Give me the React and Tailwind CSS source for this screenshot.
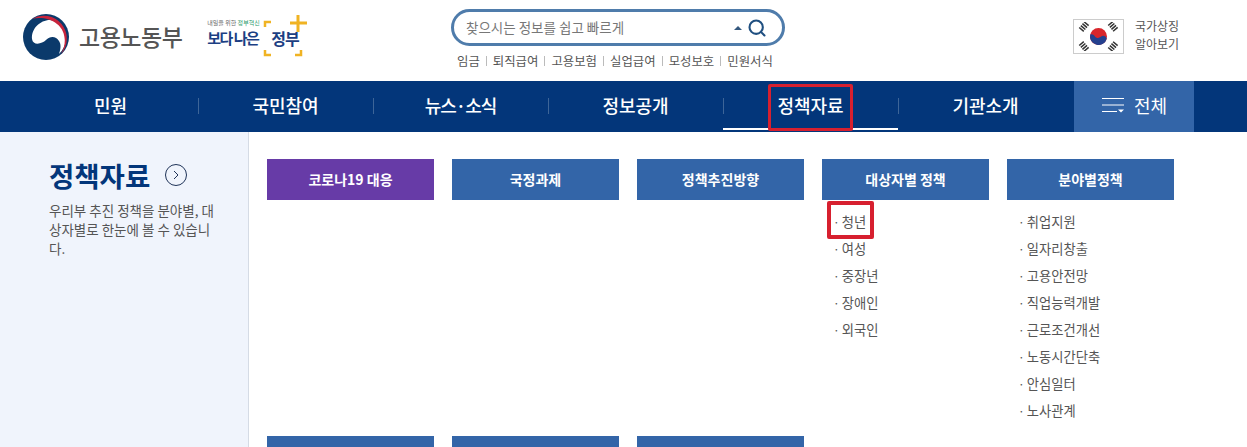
import React from "react";
import { Search } from "lucide-react";

const font = "font-['Noto_Sans_CJK_KR','Noto_Sans',sans-serif]";

const quickLinks = ["임금", "퇴직급여", "고용보험", "실업급여", "모성보호", "민원서식"];
const navItems = ["민원", "국민참여", "뉴스·소식", "정보공개", "정책자료", "기관소개"];
const columns = [
  { title: "코로나19 대응", purple: true, items: [] },
  { title: "국정과제", items: [] },
  { title: "정책추진방향", items: [] },
  { title: "대상자별 정책", items: ["청년", "여성", "중장년", "장애인", "외국인"] },
  {
    title: "분야별정책",
    items: ["취업지원", "일자리창출", "고용안전망", "직업능력개발", "근로조건개선", "노동시간단축", "안심일터", "노사관계"],
  },
];

const Emblem = () => (
  <svg width="46" height="46" viewBox="0 0 46 46">
    <circle cx="23" cy="23" r="23" fill="#0b3a6b" />
    <path d="M9 25C8 15 17 6 27 6c10 1 17 10 16 20-1 6-3 10-7 14 2-6 2-10 0-13-3-5-9-5-13-1-4 4-13 6-14-1z" fill="#fff" />
    <path d="M9 5A23 23 0 0 1 38 40C44 30 43 17 34 10 27 4 16 3 9 5z" fill="#c8243c" />
  </svg>
);

const Flag = () => (
  <div className="w-[51px] h-[35px] border border-[#ccc] flex items-center justify-center">
    <svg width="41" height="29" viewBox="0 0 41 29">
      <circle cx="20.500" cy="14.500" r="8.500" fill="#d8262c" />
      <path d="M12.200 12.600a8.500 8.500 0 0 0 16.600 3.800c-1-2.600-4-3.300-6-1.600-2 1.700-4.500 1.300-5.800-.4-1.300-1.700-3.500-2.800-4.800-1.800z" fill="#24408e" />
      <g stroke="#333" strokeWidth="6" strokeDasharray="1.500 1">
        <path d="M3 8l6-7" />
        <path d="M32 1l6 7" />
        <path d="M3 21l6 7" />
        <path d="M32 28l6-7" />
      </g>
    </svg>
  </div>
);

const LogoGov = () => (
  <div className="relative w-[101px] h-[44px] ml-[25px]">
    <div className="pt-[5px] text-[6px] leading-[8px] text-[#666] whitespace-nowrap">
      내일을 위한 <span className="text-[#2a9a6b]">정부혁신</span>
    </div>
    <div className="flex items-center mt-[-1px] font-bold text-[#1c3f83] whitespace-nowrap text-[16px] leading-[24px] tracking-[-1px]">
      <span className="w-[64px] text-[15px] tracking-[-1.500px]">보다 나은</span>
      <span>정부</span>
    </div>
    <svg className="absolute left-0 top-0" width="101" height="44" viewBox="0 0 101 44" fill="none" stroke="#f0b323" strokeWidth="2.500">
      <path d="M58 13V8h6M58 36v5h6M94 36v5h-6" />
      <path d="M91 1v17M83 9h17" strokeWidth="3" />
    </svg>
  </div>
);

export default function App() {
  return (
    <div className={`${font} h-screen overflow-hidden bg-white`}>
      <header className="h-[81px] flex">
        <div className="w-[451px] pl-[23px] pt-[14px] flex items-start">
          <Emblem />
          <span className="ml-[10px] mt-[4px] text-[23px] leading-[36px] font-medium text-[#555] tracking-[-0.500px] whitespace-nowrap">고용노동부</span>
          <LogoGov />
        </div>
        <div className="w-[334px] pt-[9px]">
          <div className="h-[37px] border-[3px] border-[#4f7cab] rounded-full flex items-center pl-[12px] pr-[15px]">
            <span className="flex-1 text-[13.500px] text-[#777]">찾으시는 정보를 쉽고 빠르게</span>
            <span className="w-0 h-0 border-x-[4px] border-x-transparent border-b-[4px] border-b-[#34587e] mr-[5px]" />
            <Search size={20} strokeWidth={2.500} className="text-[#1f4f80]" />
          </div>
          <div className="flex items-center pl-[6px] mt-[6px] text-[12.400px] leading-[18px] text-[#555] whitespace-nowrap">
            {quickLinks.map((t, i) => (
              <React.Fragment key={t}>
                {i > 0 && <span className="w-px h-[10px] bg-[#bbb] mx-[6px]" />}
                <span>{t}</span>
              </React.Fragment>
            ))}
          </div>
        </div>
        <div className="ml-[288px] pt-[19px] flex">
          <Flag />
          <div className="ml-[11px] mt-[-2px] text-[12px] leading-[18px] text-[#555]">
            <div>국가상징</div>
            <div>알아보기</div>
          </div>
        </div>
      </header>

      <nav className="h-[51px] bg-[#03367a] pl-[23px] flex">
        {navItems.map((t, i) => (
          <div key={t} className={`relative w-[175px] flex items-center justify-center pb-[3px] text-[18px] font-medium text-white ${i === 2 ? "tracking-[-1px]" : ""}`}>
            {i > 0 && <span className="absolute left-0 top-[17px] w-px h-[16px] bg-[#3d6598]" />}
            {t}
            {i === 4 && (
              <>
                <span className="absolute left-0 right-0 bottom-[2px] h-[2px] bg-white" />
                <span className="absolute left-[45px] top-[3px] w-[85px] h-[47px] border-[3px] border-[#d7202f] rounded-[2px]" />
              </>
            )}
          </div>
        ))}
        <div className="ml-[1px] w-[120px] bg-[#3365a8] flex items-center justify-center gap-[9px] pb-[3px] text-white text-[18px]">
          <svg width="24" height="16" viewBox="0 0 24 16" fill="none">
            <path d="M1 1.500h22M1 8h22M1 14.500h15" stroke="#fff" />
            <path d="M17 12.500h6l-3 3z" fill="#fff" />
          </svg>
          전체
        </div>
      </nav>

      <main className="flex h-[315px]">
        <aside className="w-[249px] shrink-0 bg-[#f0f4fc] border-r border-[#d5dbe5] pl-[49px] pr-[29px] pt-[25px]">
          <div className="flex items-center">
            <h2 className="text-[27.500px] leading-[36px] font-bold text-[#03367a] whitespace-nowrap">정책자료</h2>
            <span className="ml-[15px] w-[22px] h-[22px] rounded-full border border-[#1f3358] flex items-center justify-center">
              <svg width="6" height="10" viewBox="0 0 6 10" fill="none"><path d="M1 1l4 4-4 4" stroke="#1f3358" /></svg>
            </span>
          </div>
          <p className="mt-[8px] text-[13.500px] leading-[19px] text-[#555] break-all">우리부 추진 정책을 분야별, 대상자별로 한눈에 볼 수 있습니다.</p>
        </aside>
        <div className="pl-[18px] pt-[27px]">
          <div className="flex gap-[18px] h-[277px]">
            {columns.map((c) => (
              <div key={c.title} className="w-[167px]">
                <div className={`h-[41px] flex items-center justify-center text-[14px] font-bold text-white ${c.purple ? "bg-[#673ba7]" : "bg-[#3365a8]"}`}>
                  {c.title}
                </div>
                <ul className="mt-[8px] pl-[11px]">
                  {c.items.map((t) => (
                    <li key={t} className="relative h-[27px] flex items-center text-[13.300px] text-[#555]">
                      <span className="mr-[2px] text-[12px]">·</span>{t}
                      {t === "청년" && <span className="absolute left-[-6px] top-[-7px] w-[47px] h-[38px] border-[4px] border-[#d7202f] rounded-[2px]" />}
                    </li>
                  ))}
                </ul>
              </div>
            ))}
          </div>
          <div className="flex gap-[18px]">
            {[0, 1, 2].map((n) => (
              <div key={n} className="w-[167px] h-[41px] bg-[#3365a8]" />
            ))}
          </div>
        </div>
      </main>
    </div>
  );
}
